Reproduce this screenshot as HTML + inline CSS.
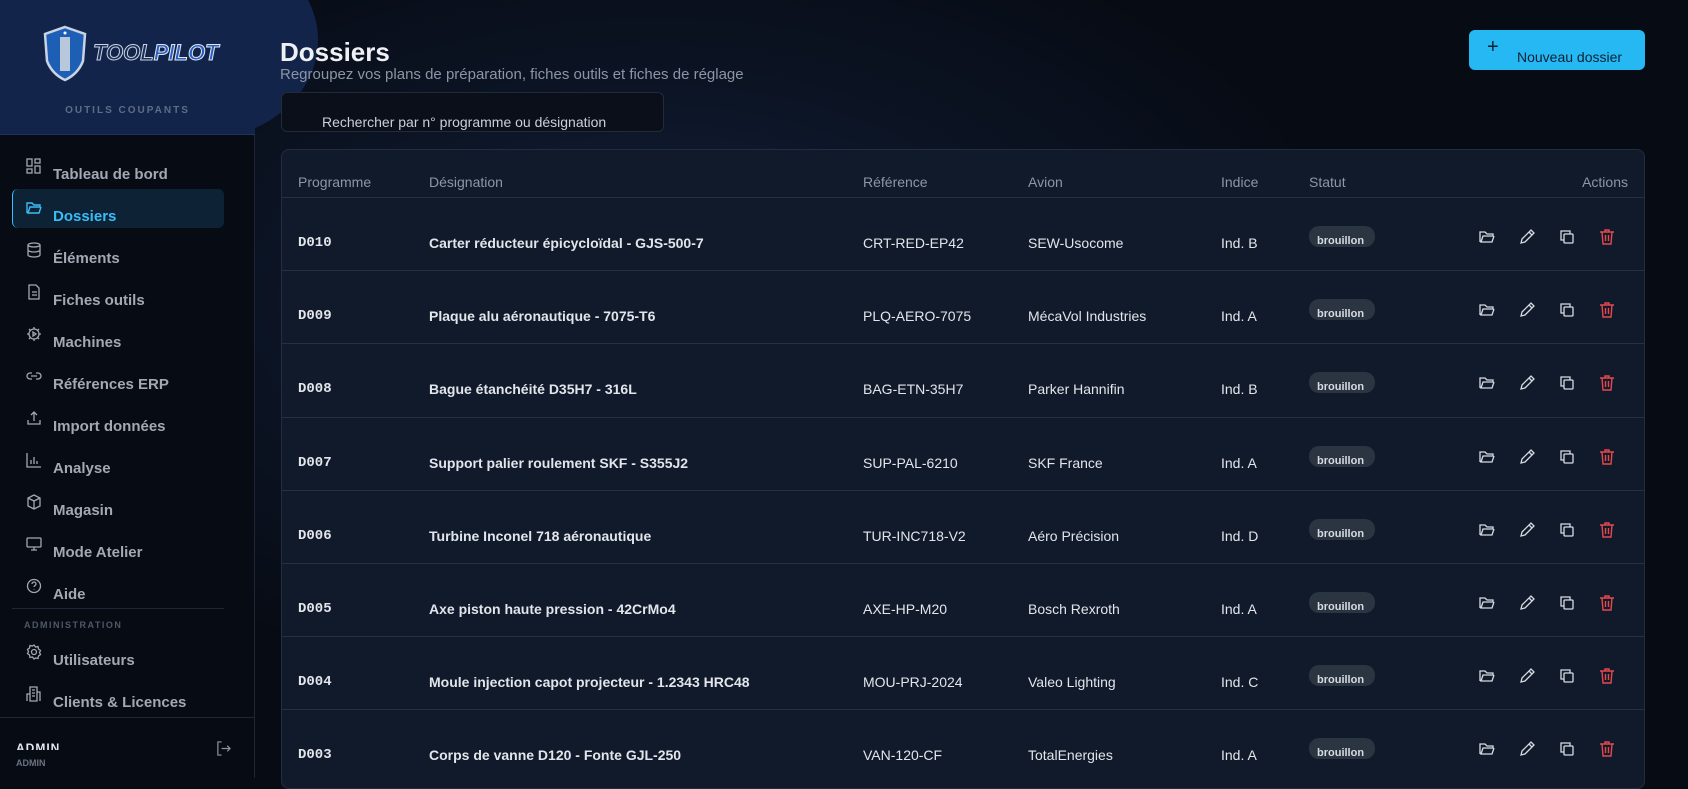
<!DOCTYPE html>
<html><head><meta charset="utf-8"><style>
*{box-sizing:border-box;margin:0;padding:0}
body{width:1688px;height:778px;overflow:hidden;background:#070b14;font-family:"Liberation Sans",sans-serif;position:relative;color:#e5e7eb}
.bg{position:absolute;left:255px;top:0;width:1433px;height:778px;background:radial-gradient(ellipse 700px 400px at 400px 300px,#15233b 0%,#0c1526 50%,#070b14 100%)}
.blob{position:absolute;left:80px;top:-60px;width:238px;height:200px;border-radius:50%;background:#12244a}
.side{position:absolute;left:0;top:0;width:255px;height:778px;background:#070b14;border-right:1px solid #1e2636}
.sidehead{position:absolute;left:0;top:0;width:255px;height:135px;background:#12244a;border-bottom:1px solid #1f3459}
.ot{position:absolute;left:0;width:255px;top:105px;text-align:center;font-size:10px;font-weight:bold;letter-spacing:2px;color:#5e6d86}
.nav{position:absolute;left:53px;font-size:15px;font-weight:bold;color:#a3a8b3}
.ico{position:absolute;left:26px;width:16px;height:16px}
.act{position:absolute;left:12px;top:189px;width:212px;height:39px;background:#0e2236;border-radius:6px;border-left:1px solid #38bdf8}
h1{position:absolute;left:280px;top:37px;font-size:26px;font-weight:bold;color:#eef0f4}
.sub{position:absolute;left:280px;top:66px;font-size:15px;color:#8c95a6}
.search{position:absolute;left:281px;top:92px;width:383px;height:40px;background:#0a0f1a;border:1px solid #222b3b;border-radius:6px;overflow:hidden}
.search span{position:absolute;left:40px;top:21px;font-size:14px;color:#cbd0d8}
.btn{position:absolute;left:1469px;top:30px;width:176px;height:40px;background:#26b8f2;border-radius:6px;color:#0b2236;font-size:14px}
.tbl{position:absolute;left:281px;top:149px;width:1364px;height:640px;background:#111a2b;border:1px solid #232d3e;border-radius:8px;overflow:hidden}
.th{position:absolute;top:24px;font-size:14px;color:#8d96a5}
.row{position:absolute;left:0;width:1364px;height:73px;border-top:1px solid #263042}
.c{position:absolute;top:37px;font-size:14px;color:#e2e5ea}
.pg{font-family:"Liberation Mono",monospace;font-weight:bold}
.d{font-weight:bold}
.badge{position:absolute;left:1027px;top:28px;width:66px;height:21px;background:#2b3441;border-radius:10px;font-size:11px;font-weight:bold;color:#d7dbe2;padding:9px 0 0 8px;line-height:12px}
.a{position:absolute;top:30px;width:18px;height:18px}
</style></head><body>
<div class="bg"></div>
<div class="blob"></div>
<div class="side">
 <div class="sidehead">
  <svg style="position:absolute;left:42px;top:25px" width="46" height="57" viewBox="0 0 46 57"><path d="M23 2 L43 9 L41 36 Q36 49 23 55 Q10 49 5 36 L3 9 Z" fill="#1d5fb5" stroke="#c9d3e3" stroke-width="2.5"/><rect x="18" y="12" width="10" height="34" fill="#b9c7db"/><circle cx="23" cy="8" r="1.5" fill="#fff"/></svg>
  <div style="position:absolute;left:93px;top:40px;font-size:22px;font-weight:bold;font-style:italic;color:#1a2f57;-webkit-text-stroke:1px #c7d2e2">TOOL<span style="color:#2a5fc0;-webkit-text-stroke:1px #dfe6f1">PILOT</span></div>
  <div class="ot">OUTILS COUPANTS</div>
 </div>
 <div class="act"></div>
 <svg class="ico" style="top:158px" viewBox="0 0 16 16" fill="none" stroke="#a3a8b3" stroke-width="1.3"><rect x="1" y="1" width="5" height="7"/><rect x="9" y="1" width="5" height="4"/><rect x="1" y="11" width="5" height="4"/><rect x="9" y="8" width="5" height="7"/></svg>
 <div class="nav" style="top:166px">Tableau de bord</div>
 <svg class="ico" style="top:200px" viewBox="0 0 16 16" fill="none" stroke="#38bdf8" stroke-width="1.4"><path d="M1 13V3h5l2 2h6v2H4L2 13h11l2-6"/></svg>
 <div class="nav" style="top:208px;color:#38bdf8">Dossiers</div>
 <svg class="ico" style="top:242px" viewBox="0 0 16 16" fill="none" stroke="#a3a8b3" stroke-width="1.3"><ellipse cx="8" cy="3" rx="6" ry="2"/><path d="M2 3v10c0 1 3 2 6 2s6-1 6-2V3M2 8c0 1 3 2 6 2s6-1 6-2"/></svg>
 <div class="nav" style="top:250px">Éléments</div>
 <svg class="ico" style="top:284px" viewBox="0 0 16 16" fill="none" stroke="#a3a8b3" stroke-width="1.3"><path d="M3 1h7l3 3v11H3z M6 8h5M6 11h5"/></svg>
 <div class="nav" style="top:292px">Fiches outils</div>
 <svg class="ico" style="top:326px" viewBox="0 0 16 16" fill="none" stroke="#a3a8b3" stroke-width="1.3"><circle cx="8" cy="8" r="5"/><path d="M8 1v2M8 13v2M1 8h2M13 8h2M3 3l1.5 1.5M11.5 11.5L13 13M3 13l1.5-1.5M11.5 4.5L13 3M7 6l3 2-3 2z"/></svg>
 <div class="nav" style="top:334px">Machines</div>
 <svg class="ico" style="top:368px" viewBox="0 0 16 16" fill="none" stroke="#a3a8b3" stroke-width="1.3"><path d="M6 5H4a3 3 0 000 6h2M10 5h2a3 3 0 010 6h-2M5 8h6"/></svg>
 <div class="nav" style="top:376px">Références ERP</div>
 <svg class="ico" style="top:410px" viewBox="0 0 16 16" fill="none" stroke="#a3a8b3" stroke-width="1.3"><path d="M8 11V2M5 5l3-3 3 3M2 10v4h12v-4"/></svg>
 <div class="nav" style="top:418px">Import données</div>
 <svg class="ico" style="top:452px" viewBox="0 0 16 16" fill="none" stroke="#a3a8b3" stroke-width="1.3"><path d="M1 1v14h14M5 12V8M8 12V5M11 12V9"/></svg>
 <div class="nav" style="top:460px">Analyse</div>
 <svg class="ico" style="top:494px" viewBox="0 0 16 16" fill="none" stroke="#a3a8b3" stroke-width="1.3"><path d="M8 1l6 3v8l-6 3-6-3V4zM2 4l6 3 6-3M8 7v8"/></svg>
 <div class="nav" style="top:502px">Magasin</div>
 <svg class="ico" style="top:536px" viewBox="0 0 16 16" fill="none" stroke="#a3a8b3" stroke-width="1.3"><rect x="1" y="2" width="14" height="9" rx="1"/><path d="M8 11v3M5 14h6"/></svg>
 <div class="nav" style="top:544px">Mode Atelier</div>
 <svg class="ico" style="top:578px" viewBox="0 0 16 16" fill="none" stroke="#a3a8b3" stroke-width="1.3"><circle cx="8" cy="8" r="6.5"/><path d="M6 6a2 2 0 114 0c0 1.5-2 1.5-2 3M8 11.5v.5"/></svg>
 <div class="nav" style="top:586px">Aide</div>
 <div style="position:absolute;left:12px;top:608px;width:212px;height:1px;background:#1f2737"></div>
 <div style="position:absolute;left:24px;top:620px;font-size:9px;font-weight:bold;letter-spacing:1.5px;color:#4f5868">ADMINISTRATION</div>
 <svg class="ico" style="top:644px" viewBox="0 0 16 16" fill="none" stroke="#a3a8b3" stroke-width="1.3"><circle cx="8" cy="8" r="2.5"/><path d="M8 1l1.5 2 2.5-.5.5 2.5 2 1.5-1 2 1 2-2 1.5-.5 2.5-2.5-.5L8 15l-1.5-2-2.5.5-.5-2.5-2-1.5 1-2-1-2 2-1.5.5-2.5 2.5.5z"/></svg>
 <div class="nav" style="top:652px">Utilisateurs</div>
 <svg class="ico" style="top:686px" viewBox="0 0 16 16" fill="none" stroke="#a3a8b3" stroke-width="1.3"><path d="M4 15V1h7v14zM11 6h3v9M1 15V8h3M6 4h3M6 7h3M6 10h3"/></svg>
 <div class="nav" style="top:694px">Clients &amp; Licences</div>
 <div style="position:absolute;left:0;top:717px;width:255px;height:1px;background:#1f2737"></div>
 <div style="position:absolute;left:16px;top:741px;height:9px;overflow:hidden;font-size:12px;font-weight:bold;color:#e5e7eb;letter-spacing:1px;line-height:14px">ADMIN</div>
 <div style="position:absolute;left:16px;top:758px;font-size:9px;font-weight:bold;color:#6b7381">ADMIN</div>
 <svg style="position:absolute;left:216px;top:741px" width="15" height="15" viewBox="0 0 16 16" fill="none" stroke="#8d939e" stroke-width="1.3"><path d="M6 1H2v14h4M6 8h9M12 5l3 3-3 3"/></svg>
</div>

<h1>Dossiers</h1>
<div class="sub">Regroupez vos plans de préparation, fiches outils et fiches de réglage</div>
<div class="search"><span>Rechercher par n° programme ou désignation</span></div>
<div class="btn"><span style="position:absolute;left:18px;top:6px;font-size:20px">+</span><span style="position:absolute;left:48px;top:19px">Nouveau dossier</span></div>

<div class="tbl">
 <div class="th" style="left:16px">Programme</div>
 <div class="th" style="left:147px">Désignation</div>
 <div class="th" style="left:581px">Référence</div>
 <div class="th" style="left:746px">Avion</div>
 <div class="th" style="left:939px">Indice</div>
 <div class="th" style="left:1027px">Statut</div>
 <div class="th" style="right:16px">Actions</div>
 <div id="rows"></div>
</div>
<script>
var d=[["D010","Carter réducteur épicycloïdal - GJS-500-7","CRT-RED-EP42","SEW-Usocome","Ind. B"],
["D009","Plaque alu aéronautique - 7075-T6","PLQ-AERO-7075","MécaVol Industries","Ind. A"],
["D008","Bague étanchéité D35H7 - 316L","BAG-ETN-35H7","Parker Hannifin","Ind. B"],
["D007","Support palier roulement SKF - S355J2","SUP-PAL-6210","SKF France","Ind. A"],
["D006","Turbine Inconel 718 aéronautique","TUR-INC718-V2","Aéro Précision","Ind. D"],
["D005","Axe piston haute pression - 42CrMo4","AXE-HP-M20","Bosch Rexroth","Ind. A"],
["D004","Moule injection capot projecteur - 1.2343 HRC48","MOU-PRJ-2024","Valeo Lighting","Ind. C"],
["D003","Corps de vanne D120 - Fonte GJL-250","VAN-120-CF","TotalEnergies","Ind. A"]];
var ic='<svg class="a" style="left:1196px" viewBox="0 0 18 18" fill="none" stroke="#d7dbe2" stroke-width="1.3"><path d="M2 14V4h5l2 2h6v2H5l-2 6h11l2-6"/></svg>'+
'<svg class="a" style="left:1236px" viewBox="0 0 18 18" fill="none" stroke="#d7dbe2" stroke-width="1.3"><path d="M3 15l1-4 9-9 3 3-9 9zM11 4l3 3"/></svg>'+
'<svg class="a" style="left:1276px" viewBox="0 0 18 18" fill="none" stroke="#d7dbe2" stroke-width="1.3"><rect x="6" y="6" width="9" height="9" rx="1"/><path d="M12 6V3H3v9h3"/></svg>'+
'<svg class="a" style="left:1316px" viewBox="0 0 18 18" fill="none" stroke="#e5484d" stroke-width="1.4"><path d="M2 4h14M7 4V2h4v2M4 4l1 12h8l1-12M7.5 7v6M10.5 7v6"/></svg>';
var h='';d.forEach(function(r,i){h+='<div class="row" style="top:'+(47+i*73.2)+'px"><div class="c pg" style="left:16px">'+r[0]+'</div><div class="c d" style="left:147px">'+r[1]+'</div><div class="c" style="left:581px">'+r[2]+'</div><div class="c" style="left:746px">'+r[3]+'</div><div class="c" style="left:939px">'+r[4]+'</div><div class="badge">brouillon</div>'+ic+'</div>';});
document.getElementById('rows').innerHTML=h;
</script>
</body></html>
